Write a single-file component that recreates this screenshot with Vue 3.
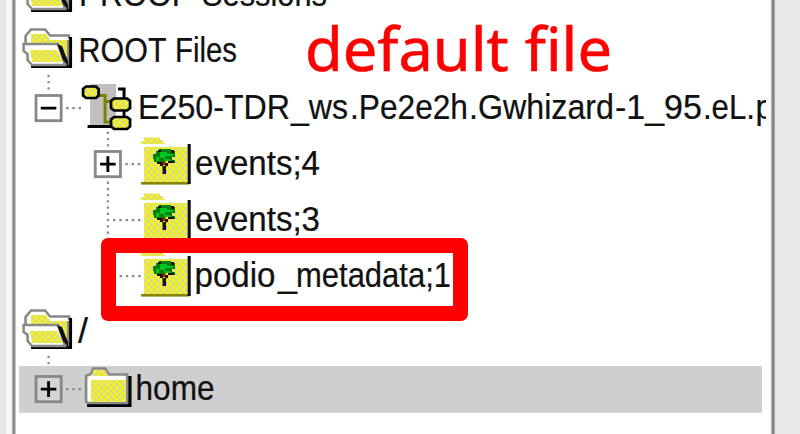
<script setup>
// Text runs: [string, start x, run width], in panel coordinates
const rows = [
  { id: 'proof', icon: 'open', runs: [['PROOF', 79, 112], ['Sessions', 202, 125]] },
  { id: 'root', icon: 'open', runs: [['ROOT', 78.5, 88], ['Files', 175, 62]], below: 48.5 },
  {
    id: 'file', icon: 'file', box: '-', cx: 48.5,
    runs: [['E250-TDR', 138, 152], ['_ws', 291, 57], ['.Pe2e2h', 350, 118], ['.Gwhizard', 469, 145], ['-1_95', 615, 87], ['.eL.', 703, 52], ['p', 755.5, 18]],
  },
  { id: 'ev4', icon: 'leaf', box: '+', cx: 107.8, runs: [['events;4', 195, 125]] },
  { id: 'ev3', icon: 'leaf', branch: 113, runs: [['events;3', 195, 125]] },
  { id: 'meta', icon: 'leaf', branch: 119.5, runs: [['podio', 194.5, 81], ['_', 278, 19], ['metadata;1', 296, 155]] },
  { id: 'slash', icon: 'open', runs: [['/', 78, 10]], below: 48.5 },
  { id: 'home', icon: 'closed', box: '+', cx: 48.5, selected: true, runs: [['home', 135.5, 79]] },
]
</script>

<template>
  <main class="window">
    <svg class="defs" width="0" height="0" aria-hidden="true">
      <defs>
        <pattern id="weave" width="6.24" height="6.24" patternUnits="userSpaceOnUse">
          <rect width="6.24" height="6.24" fill="#f8f800" />
          <rect x="0" y="0" width="3.12" height="3.12" fill="#d6d69c" />
          <rect x="3.12" y="3.12" width="3.12" height="3.12" fill="#d6d69c" />
        </pattern>
        <g id="open" fill="none">
          <path d="M31 42V10L34 6.500H45L49 14H68V40L64 44H32Z" fill="#fff" />
          <path d="M31 19V11H46L50 17H65V21H31Z" fill="url(#weave)" />
          <path d="M25.500 21V13L31 6.500H45L50 12.500H69V16" stroke="#888" stroke-width="2.600" />
          <path d="M69 14H72V45H31V42H66L69 38Z" fill="#000" />
          <path d="M23.500 21H58L65 42H32L27.500 37V31L23.500 28Z" fill="#fff" stroke="#888" stroke-width="2.500" />
          <path d="M30 27H57L63 39H32Z" fill="url(#weave)" />
          <path d="M60 21L68 42V17H64V21Z" fill="url(#weave)" />
          <path d="M67 17H69V42H67Z" fill="#888" />
          <path d="M57 21L62 23L65 31L68 38V43L63 37L60 29Z" fill="#111" />
        </g>
        <g id="closed">
          <path d="M128 15H131.500V46H87V42H128Z" fill="#000" />
          <path d="M86 41V15L91 13L93 7.500H105L109 13.500H127V42H88Z" fill="#fff" stroke="#888" stroke-width="2.600" />
          <path d="M93 15V9H105L108 15Z" fill="url(#weave)" />
          <rect x="91" y="19" width="34.500" height="22" fill="url(#weave)" />
        </g>
        <g id="leaf">
          <path d="M141 8V5H144V1.500H160V4H163V7H165V8Z" fill="url(#weave)" />
          <rect x="144" y="11" width="43" height="36" fill="url(#weave)" />
          <rect x="141" y="46" width="48" height="2.600" fill="#858500" />
          <rect x="187.500" y="8" width="3.200" height="40" fill="#111" />
          <path d="M153 18H156V15H159V13H171V15H175V21H172V24H175V27H168V24H165V28H158V26H154V23H153Z" fill="#087d08" />
          <path d="M160 16H167V18H173V20H165V23H170V25H164V22H159V25H156V21H160Z" fill="#00c51d" />
          <path d="M158 14H161V16H158ZM171 14H174V17H171ZM168 25H174V27H168ZM157 26H162V28H157Z" fill="#111" />
          <path d="M160 27H163V30H165V27H168V30H166V38H162.500V30H160Z" fill="#111" />
          <rect x="163" y="25" width="2.500" height="4" fill="#a82010" />
        </g>
        <g id="file">
          <rect x="90" y="4" width="26" height="43" fill="#c0c0c0" />
          <path d="M99 15.500H105V42H111M105 21.500H111" fill="none" stroke="#808000" stroke-width="3.100" />
          <path d="M118 9H124V48M87.500 46.500H113" fill="none" stroke="#000" stroke-width="3" />
          <g fill="url(#weave)" stroke="#000" stroke-width="2.700">
            <path d="M86 6.500H96L98.500 9V15.500L96 18H86L83 15.500V9Z" />
            <path d="M114 18.500H127L130 21V28L127 30.500H114L111 28V21Z" />
            <path d="M114 37H127L130 39.500V46.500L127 49H114L111 46.500V39.500Z" />
          </g>
        </g>
      </defs>
    </svg>

    <section class="panel">
      <div v-for="row in rows" :key="row.id" class="row">
        <svg class="cell" viewBox="16 0 750 56.2">
          <rect v-if="row.selected" x="19" y="5" width="743" height="46.8" fill="#cfcfcf" />
          <g class="dots">
            <path v-if="row.below" :d="`M${row.below} 51.7v18`" />
            <path v-if="row.id === 'file'" d="M107.8 51.7v18" />
            <path v-if="row.id === 'ev4'" d="M107.800 45.500V110" />
            <path v-if="row.box" :d="`M${row.cx + 17.500} 28.1h15.500`" />
            <path v-if="row.branch" :d="`M${row.branch} 28.1H141`" />
          </g>
          <g v-if="row.box">
            <rect :x="row.cx - 12.6" y="15.5" width="25.2" height="25.2" :class="row.selected ? 'tinted' : 'plain'" stroke="#888" stroke-width="2.8" />
            <path :d="`M${row.cx - 7.800} 28.1h15.600`" stroke="#000" stroke-width="2.9" />
            <path v-if="row.box === '+'" :d="`M${row.cx} 20.3v15.600`" stroke="#000" stroke-width="2.9" />
          </g>
          <use :href="'#' + row.icon" />
          <text v-for="run in row.runs" :key="run[1]" :x="run[1]" y="38.9" :textLength="run[2]" lengthAdjust="spacingAndGlyphs">{{ run[0] }}</text>
        </svg>
      </div>
    </section>

    <div class="highlight"></div>
    <svg class="note" viewBox="0 0 320 80">
      <text x="5" y="61" textLength="307" lengthAdjust="spacingAndGlyphs">default file</text>
    </svg>
  </main>
</template>

<style>
body { margin: 0; overflow: hidden; }
</style>

<style scoped>
.window {
  position: relative;
  box-sizing: border-box;
  width: 800px;
  height: 434px;
  padding: 0 25px 0 6px;
  overflow: hidden;
  background: #e7e7e7;
}
.defs { position: absolute; }
.panel {
  display: flex;
  flex-direction: column;
  box-sizing: border-box;
  height: 434px;
  padding-left: 10px;
  overflow: hidden;
  background: linear-gradient(90deg, #f8f8f8 0 5px, #ddd 6px, #8d8d8d 7px 9px, #fff 10px, #fff calc(100% - 5px), #e5e5e5 calc(100% - 4px), #888 calc(100% - 3px) calc(100% - 1px), #bbb 100%);
}
.row {
  flex: none;
  width: 750px;
  height: 56.2px;
}
.row:first-child { margin-top: -32.8px; }
.cell {
  display: block;
  width: 750px;
  height: 56.2px;
  overflow: visible;
  clip-path: inset(0 0 -70px 0);
}
.cell text {
  font: 34.5px "Liberation Sans", Arial, sans-serif;
  fill: #111;
  stroke: #111;
  stroke-width: 0.25px;
}
.plain { fill: #fff; }
.tinted { fill: #d4d4d4; }
.dots path {
  fill: none;
  stroke: #888;
  stroke-width: 2.2;
  stroke-dasharray: 2.4 3.84;
}
.highlight {
  position: absolute;
  left: 101px;
  top: 237.5px;
  box-sizing: border-box;
  width: 367px;
  height: 83px;
  border: 15.5px solid #f00;
  border-radius: 7px;
}
.note {
  position: absolute;
  left: 300px;
  top: 10px;
  width: 320px;
  height: 80px;
}
.note text {
  font: 61px "Noto Sans", "Open Sans", sans-serif;
  fill: #f00;
  stroke: #f00;
  stroke-width: 0.6px;
}
</style>
